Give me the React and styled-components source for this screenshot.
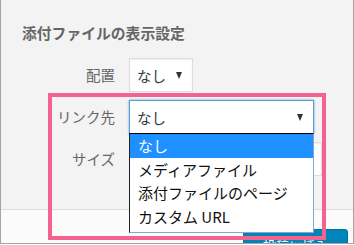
import React from "react";
import styled, { createGlobalStyle } from "styled-components";

const GlobalStyle = createGlobalStyle`
  html, body {
    margin: 0;
    padding: 0;
    background: #fff;
  }
  body {
    font-family: "Noto Sans CJK JP", "Noto Sans", sans-serif;
  }
`;

const linkOptions = ["なし", "メディアファイル", "添付ファイルのページ", "カスタム URL"];

const App = () => {
  return (
    <>
      <GlobalStyle />
      <Frame>
        <Settings>
          <Title>添付ファイルの表示設定</Title>
          <Fields>
            <Label>配置</Label>
            <Select width="64px">
              <span>なし</span>
              <Arrow />
            </Select>
            <Label>リンク先</Label>
            <Select width="185px" focused>
              <span>なし</span>
              <Arrow />
            </Select>
            <Label>サイズ</Label>
            <Select width="193px" />
          </Fields>
        </Settings>
        <Footer>
          <InsertButton>投稿に挿入</InsertButton>
        </Footer>
        <Menu>
          {linkOptions.map((option, i) => (
            <MenuItem key={option} selected={i === 0}>
              {option}
            </MenuItem>
          ))}
        </Menu>
        <Highlight />
      </Frame>
    </>
  );
};

const Frame = styled.div`
  position: relative;
  width: 354px;
  height: 244px;
  box-sizing: border-box;
  display: flex;
  flex-direction: column;
  background: #f3f3f3;
  border-left: 1px solid #a5a5a5;
  border-right: 1px solid #a5a5a5;
  border-bottom: 1px solid #a5a5a5;
  overflow: hidden;
`;

const Settings = styled.div`
  flex-shrink: 0;
  height: 209px;
  box-sizing: border-box;
  padding: 24px 0 0 21px;
`;

const Title = styled.h2`
  margin: 0;
  font-size: 14.8px;
  line-height: 18px;
  font-weight: bold;
  color: #666;
`;

const Fields = styled.div`
  display: grid;
  grid-template-columns: 93px auto;
  column-gap: 14px;
  row-gap: 8px;
  align-items: center;
  justify-items: start;
  margin-top: 16px;
`;

const Label = styled.div`
  justify-self: end;
  font-size: 14.5px;
  line-height: 20px;
  color: #666;
`;

const Select = styled.div`
  box-sizing: border-box;
  width: ${(p) => p.width};
  height: 34px;
  display: flex;
  align-items: center;
  justify-content: space-between;
  padding: 0 10px 0 7px;
  background: #fff;
  border: 1px solid ${(p) => (p.focused ? "#5b9dd9" : "#ddd")};
  box-shadow: ${(p) =>
    p.focused ? "0 0 2px rgba(30, 140, 190, 0.8)" : "inset 0 1px 2px rgba(0, 0, 0, 0.07)"};
  font-size: 14.5px;
  color: #32373c;
`;

const Arrow = styled.i`
  width: 0;
  height: 0;
  border-left: 3.5px solid transparent;
  border-right: 3.5px solid transparent;
  border-top: 7px solid #333;
`;

const Menu = styled.ul`
  position: absolute;
  left: 128px;
  top: 133px;
  width: 185px;
  box-sizing: border-box;
  margin: 0;
  padding: 0 0 4px;
  list-style: none;
  background: #fff;
  border: 1px solid #8ea3cc;
  border-top-color: #000;
  border-left-color: #222;
`;

const MenuItem = styled.li`
  height: 23.5px;
  line-height: 23.5px;
  padding-left: 8px;
  font-size: 15px;
  color: ${(p) => (p.selected ? "#fff" : "#111")};
  background: ${(p) => (p.selected ? "#1e90ff" : "transparent")};
  white-space: nowrap;
`;

const Footer = styled.div`
  flex: 1;
  min-height: 0;
  display: flex;
  justify-content: flex-end;
  align-items: flex-start;
  padding: 19px 5px 0 0;
  background: #fbfbfb;
  border-top: 1px solid #dddddd;
`;

const InsertButton = styled.button`
  width: 105px;
  height: 34px;
  flex-shrink: 0;
  background: #0085ba;
  border: 1px solid #0073aa;
  border-radius: 3px;
  color: #fff;
  font-family: inherit;
  font-size: 13px;
  line-height: 32px;
  padding: 0;
  text-align: center;
`;

const Highlight = styled.div`
  position: absolute;
  left: 47px;
  top: 93px;
  width: 278px;
  height: 147px;
  box-sizing: border-box;
  border: 4px solid #f4628f;
  pointer-events: none;
`;

export default App;
